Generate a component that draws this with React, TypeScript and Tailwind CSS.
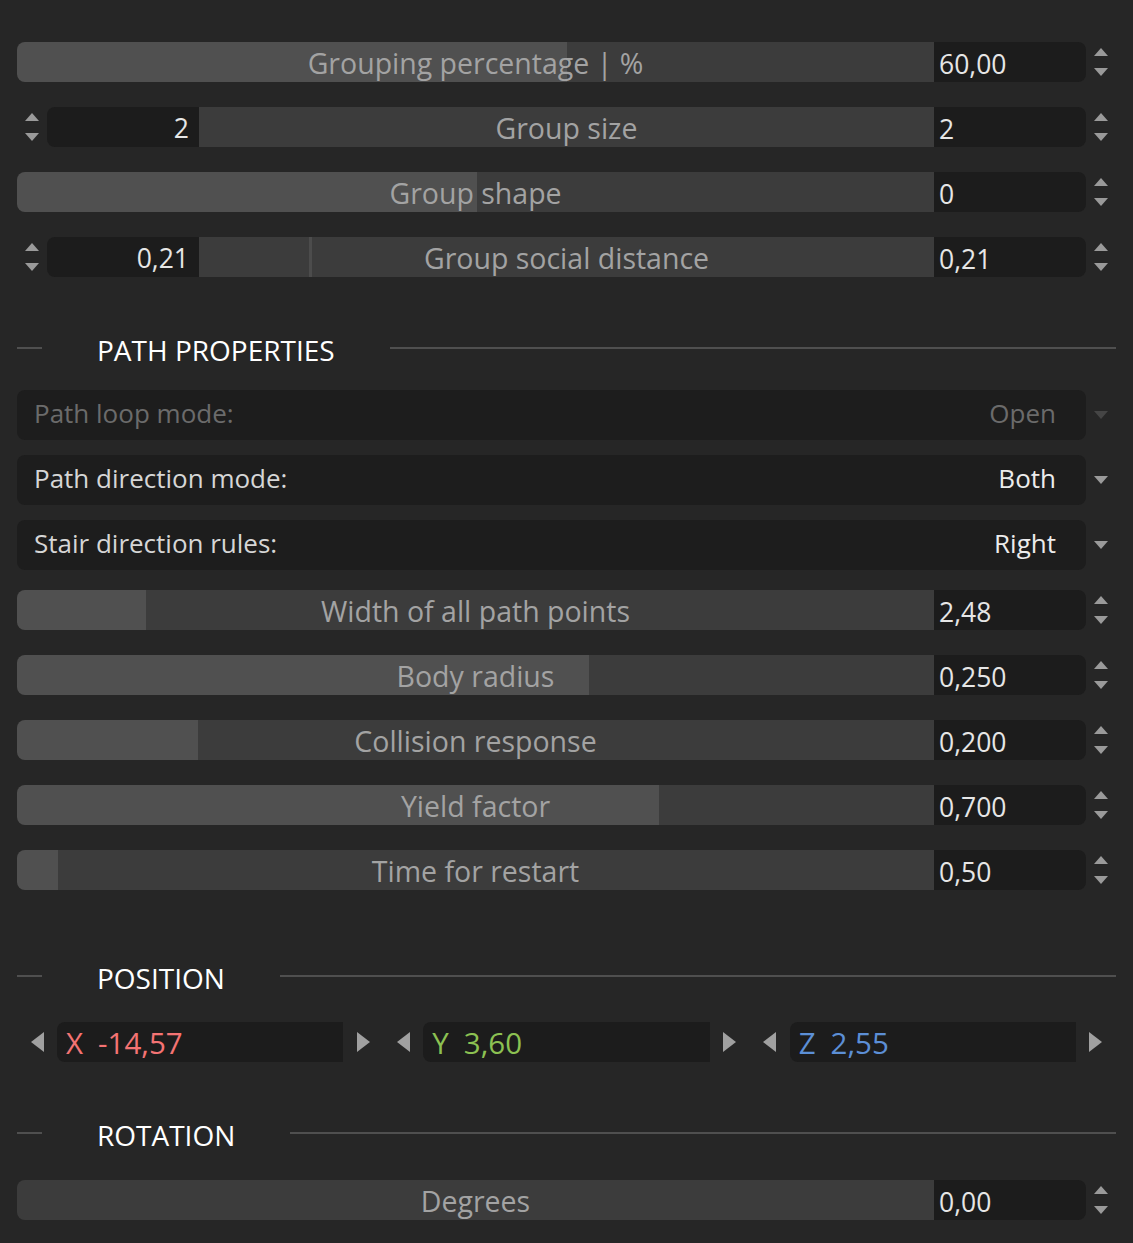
import type { ReactNode } from 'react';

const FONT = { fontFamily: '"Open Sans", "Noto Sans", sans-serif' };

function Spinner() {
  return (
    <div className="w-[30px] flex items-center justify-center shrink-0">
      <svg width="14" height="40" viewBox="0 0 14 40">
        <polygon points="7,6 14,14 0,14" fill="#9a9a9a" />
        <polygon points="0,26 14,26 7,34" fill="#9a9a9a" />
      </svg>
    </div>
  );
}

function DropArrow({ dim }: { dim?: boolean }) {
  return (
    <div className="w-[30px] flex items-center justify-center shrink-0">
      <svg width="14" height="8" viewBox="0 0 14 8">
        <polygon points="0,0 14,0 7,8" fill={dim ? '#454545' : '#9a9a9a'} />
      </svg>
    </div>
  );
}

function Slider({ label, value, fill }: { label: string; value: string; fill: number }) {
  return (
    <div className="flex h-10">
      <div
        className="flex-1 rounded-l-lg flex items-center justify-center pt-[3px] text-[28.5px] text-[#a3a3a3]"
        style={{ background: `linear-gradient(to right, #505050 ${fill}px, #3c3c3c ${fill}px)` }}
      >
        {label}
      </div>
      <div className="w-[152px] bg-[#1c1c1c] rounded-r-lg flex items-center pl-[5px] pt-[5px] text-[26.5px] text-[#e6e6e6]">
        {value}
      </div>
      <Spinner />
    </div>
  );
}

function IntSlider({ label, value, marker }: { label: string; value: string; marker?: boolean }) {
  return (
    <div className="flex h-10 -ml-[30px]">
      <Spinner />
      <div className="w-[152px] bg-[#1c1c1c] rounded-l-lg flex items-center justify-end pr-[10px] pt-[4px] text-[26.5px] text-[#e6e6e6]">
        {value}
      </div>
      <div className="relative flex-1 bg-[#3c3c3c] flex items-center justify-center pt-[3px] text-[28.5px] text-[#a3a3a3]">
        {marker && <div className="absolute left-[110px] top-0 bottom-0 w-[3px] bg-[#4c4c4c]" />}
        {label}
      </div>
      <div className="w-[152px] bg-[#1c1c1c] rounded-r-lg flex items-center pl-[5px] pt-[5px] text-[26.5px] text-[#e6e6e6]">
        {value}
      </div>
      <Spinner />
    </div>
  );
}

function Dropdown({ label, value, disabled }: { label: string; value: string; disabled?: boolean }) {
  return (
    <div className="flex h-[50px]">
      <div
        className={`flex-1 bg-[#1d1d1d] rounded-lg flex items-center justify-between pl-[17px] pr-[30px] pb-[4px] text-[26px] ${
          disabled ? 'text-[#6b6b6b]' : 'text-[#d6d6d6]'
        }`}
      >
        <span>{label}</span>
        <span className={disabled ? '' : 'text-[#ececec]'}>{value}</span>
      </div>
      <DropArrow dim={disabled} />
    </div>
  );
}

function Header({ children }: { children: ReactNode }) {
  return (
    <div className="flex items-center h-[26px]">
      <div className="w-[25px] h-[2px] bg-[#4f4f4f] -mt-[4px]" />
      <div className="ml-[55px] text-[28px] text-white leading-none">{children}</div>
      <div className="ml-[55px] flex-1 h-[2px] bg-[#4f4f4f] -mt-[4px]" />
    </div>
  );
}

function Tri({ dir }: { dir: 'l' | 'r' }) {
  return (
    <div className="w-10 flex items-center justify-center shrink-0">
      <svg width="13" height="20" viewBox="0 0 13 20">
        <polygon points={dir === 'l' ? '13,0 13,20 0,10' : '0,0 0,20 13,10'} fill="#a0a0a0" />
      </svg>
    </div>
  );
}

function Axis({ axis, value, color }: { axis: string; value: string; color: string }) {
  return (
    <div className="flex-1 flex h-10">
      <Tri dir="l" />
      <div className={`flex-1 bg-[#1c1c1c] rounded-l-lg flex items-center pl-[9px] pt-[3px] text-[29.5px] ${color}`}>
        <span>{axis}</span>
        <span className="ml-[15px]">{value}</span>
      </div>
      <Tri dir="r" />
    </div>
  );
}

export default function App() {
  return (
    <div className="w-[1133px] h-[1243px] bg-[#262626] pl-[17px] pr-[17px] pt-[42px]" style={FONT}>
      <div className="flex flex-col gap-[25px]">
        <Slider label="Grouping percentage | %" value="60,00" fill={550} />
        <div className="pl-[30px]">
          <IntSlider label="Group size" value="2" />
        </div>
        <Slider label="Group shape" value="0" fill={460} />
        <div className="pl-[30px]">
          <IntSlider label="Group social distance" value="0,21" marker />
        </div>
      </div>

      <div className="mt-[60px] mb-[27px]">
        <Header>PATH PROPERTIES</Header>
      </div>

      <div className="flex flex-col gap-[15px]">
        <Dropdown label="Path loop mode:" value="Open" disabled />
        <Dropdown label="Path direction mode:" value="Both" />
        <Dropdown label="Stair direction rules:" value="Right" />
      </div>

      <div className="flex flex-col gap-[25px] mt-[20px]">
        <Slider label="Width of all path points" value="2,48" fill={129} />
        <Slider label="Body radius" value="0,250" fill={572} />
        <Slider label="Collision response" value="0,200" fill={181} />
        <Slider label="Yield factor" value="0,700" fill={642} />
        <Slider label="Time for restart" value="0,50" fill={41} />
      </div>

      <div className="mt-[75px] mb-[31px]">
        <Header>POSITION</Header>
      </div>

      <div className="flex">
        <Axis axis="X" value="-14,57" color="text-[#f47373]" />
        <Axis axis="Y" value="3,60" color="text-[#8cc152]" />
        <Axis axis="Z" value="2,55" color="text-[#5c8fd6]" />
      </div>

      <div className="mt-[60px] mb-[32px]">
        <Header>ROTATION</Header>
      </div>

      <Slider label="Degrees" value="0,00" fill={0} />
    </div>
  );
}
